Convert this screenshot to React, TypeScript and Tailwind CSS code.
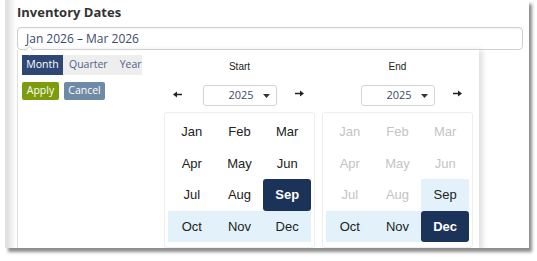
import { ReactNode } from 'react';

const START_SELECTED = 'Sep';
const END_SELECTED = 'Dec';

const months = ['Jan', 'Feb', 'Mar', 'Apr', 'May', 'Jun', 'Jul', 'Aug', 'Sep', 'Oct', 'Nov', 'Dec'];

function Arrow({ dir }: { dir: 'left' | 'right' }) {
  return (
    <svg width="9" height="7" viewBox="0 0 9 7" className={dir === 'left' ? '' : 'rotate-180'}>
      <path d="M0 3.5 L4 0.5 L4 2.7 L9 2.7 L9 4.3 L4 4.3 L4 6.5 Z" fill="#222" />
    </svg>
  );
}

function YearSelect() {
  return (
    <div className="w-[74px] h-[21px] border border-[#d5d5d5] rounded-[3px] bg-white flex items-center justify-between pl-[25px] pr-[6px] text-[11px] text-[#3b4a6b] font-['Open_Sans',sans-serif]">
      <span>2025</span>
      <svg width="7" height="4" viewBox="0 0 7 4">
        <path d="M0 0 L7 0 L3.5 4 Z" fill="#333" />
      </svg>
    </div>
  );
}

function MonthGrid({ kind }: { kind: 'start' | 'end' }) {
  const startIdx = months.indexOf(START_SELECTED);
  const endIdx = months.indexOf(END_SELECTED);
  return (
    <div className="border border-[#eeeeee] rounded-[3px] p-[3px] pb-[4px] h-[136px]">
      <div className="grid grid-cols-3">
        {months.map((m, i) => {
          const selected = kind === 'start' ? i === startIdx : i === endIdx;
          const inRange = (i > startIdx && i <= endIdx && !selected) || (kind === 'end' && i === startIdx);
          const disabled = kind === 'end' && i < startIdx;
          let cls = 'text-[#222]';
          if (selected) cls = 'bg-[#1b3358] text-white font-bold rounded-[3px]';
          else if (inRange) cls = 'bg-[#e3f2fa] text-[#222]';
          else if (disabled) cls = 'text-[#c4c4c4]';
          return (
            <div key={m} className={`h-[31.5px] flex items-center justify-center text-[13px] ${cls}`}>
              {m}
            </div>
          );
        })}
      </div>
    </div>
  );
}

function Column({ label, left, children }: { label: string; left: boolean; children: ReactNode }) {
  return (
    <div className="w-[151px] flex flex-col">
      <div className="h-[17px] mt-[8px] flex items-center justify-center text-[10px] text-[#222]">{label}</div>
      <div className="h-[21px] mt-[10px] flex items-center justify-center relative">
        {left && (
          <span className="absolute left-[9px] top-[6px]">
            <Arrow dir="left" />
          </span>
        )}
        <YearSelect />
        <span className="absolute right-[11px] top-[5px]">
          <Arrow dir="right" />
        </span>
      </div>
      <div className="mt-[6px]">{children}</div>
    </div>
  );
}

export default function App() {
  return (
    <div className="w-[537px] h-[261px] bg-white overflow-hidden font-['Liberation_Sans',Arial,sans-serif]">
      <div className="ml-[5px] w-[524px] h-[248px] bg-white border-l-[2px] border-[#e2e2e2] shadow-[3px_4px_3px_rgba(0,0,0,0.45),inset_10px_0_7px_-6px_rgba(0,0,0,0.14)] overflow-hidden">
        <div className="pl-[10px] pr-[6px]">
          <div className="h-[27px] pt-[3px] text-[13px] font-bold text-[#333] font-['Open_Sans',sans-serif]">
            Inventory Dates
          </div>
          <div className="relative h-[23px] border border-[#cfcfcf] rounded-[4px] flex items-center pl-[8px] text-[12px] text-[#3b4a6b] font-['Open_Sans',sans-serif] shadow-[inset_0_1px_1px_rgba(0,0,0,0.05)]">
            Jan 2026 – Mar 2026
            <span className="absolute left-[8px] bottom-[-1px] w-[7px] h-[7px] bg-white border-l border-t border-[#d8d8d8] rotate-45 translate-y-[4px]" />
          </div>
          <div className="w-[462px] h-[200px] bg-white border-l border-[#e0e0e0] shadow-[4px_0_5px_rgba(0,0,0,0.12)] flex pl-[4px]">
            <div className="w-[142px] pt-[5px]">
              <div className="w-[120px] h-[20px] bg-[#eeeeee] flex items-center text-[10.5px] font-['Open_Sans',sans-serif]">
                <div className="w-[41px] h-[20px] bg-[#2e4775] text-white flex items-center justify-center">Month</div>
                <div className="ml-[6px] text-[#4f6288]">Quarter</div>
                <div className="ml-[12px] text-[#4f6288]">Year</div>
              </div>
              <div className="mt-[7px] flex gap-[5px] text-[10.5px] text-white font-['Open_Sans',sans-serif]">
                <div className="w-[37px] h-[18px] rounded-[2px] bg-[#7d9c0d] flex items-center justify-center">Apply</div>
                <div className="w-[41px] h-[18px] rounded-[2px] bg-[#6f8aa6] flex items-center justify-center">Cancel</div>
              </div>
            </div>
            <Column label="Start" left>
              <MonthGrid kind="start" />
            </Column>
            <div className="w-[7px]" />
            <Column label="End" left={false}>
              <MonthGrid kind="end" />
            </Column>
          </div>
        </div>
      </div>
    </div>
  );
}
